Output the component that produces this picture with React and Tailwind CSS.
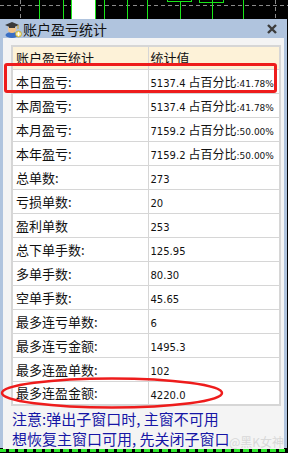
import React from 'react';

const rows = [
  ['本日盈亏:', '5137.4', '41.78%'],
  ['本周盈亏:', '5137.4', '41.78%'],
  ['本月盈亏:', '7159.2', '50.00%'],
  ['本年盈亏:', '7159.2', '50.00%'],
  ['总单数:', '273'],
  ['亏损单数:', '20'],
  ['盈利单数', '253'],
  ['总下单手数:', '125.95'],
  ['多单手数:', '80.30'],
  ['空单手数:', '45.65'],
  ['最多连亏单数:', '6'],
  ['最多连亏金额:', '1495.3'],
  ['最多连盈单数:', '102'],
  ['最多连盈金额:', '4220.0'],
];

const cjk = "font-['Noto_Sans_CJK_SC',sans-serif]";
const num = "font-['DejaVu_Sans','Noto_Sans_CJK_SC',sans-serif]";

// chart lines peeking out above the dialog
const ChartTop = () => (
  <svg width="288" height="19" className="block">
    <line x1="0" y1="5.5" x2="288" y2="5.5" stroke="#8a8a8a" strokeDasharray="4 3" />
    <line x1="20.5" y1="0" x2="20.5" y2="19" stroke="#8a8a8a" strokeDasharray="4 3" />
    <line x1="275.5" y1="0" x2="275.5" y2="19" stroke="#8a8a8a" strokeDasharray="4 3" />
    {[39, 63, 104, 127, 147, 212, 243].map((x) => (
      <line key={x} x1={x + 0.5} y1="0" x2={x + 0.5} y2="19" stroke="#19e619" />
    ))}
    <rect x="71.5" y="-1" width="24" height="21" fill="#ffffff" stroke="#19e619" />
    <rect x="167.5" y="-2" width="24" height="3.5" fill="none" stroke="#19e619" />
    <line x1="180.5" y1="1.5" x2="180.5" y2="19" stroke="#19e619" />
    <rect x="199.5" y="-2" width="24" height="4.5" fill="none" stroke="#19e619" />
  </svg>
);

const UserIcon = () => (
  <svg width="18" height="18" viewBox="0 0 18 18">
    <ellipse cx="8" cy="15" rx="6.5" ry="3" fill="#3a6fc4" />
    <circle cx="8" cy="9" r="4" fill="#f2c38a" />
    <path d="M1 5 L8 2 L15 5 L8 8 Z" fill="#3a3a3a" />
    <rect x="5" y="5.5" width="6" height="2.5" fill="#3a3a3a" />
    <line x1="14" y1="5" x2="14" y2="9" stroke="#c9a227" strokeWidth="1" />
    <circle cx="14.5" cy="14" r="3" fill="#f4e27a" stroke="#b89a20" strokeWidth="0.6" />
    <path d="M14.5 12 V16 M12.5 14 H16.5" stroke="#ffffff" strokeWidth="1" />
  </svg>
);

export default function App() {
  return (
    <div className="w-[288px] h-[453px] bg-black overflow-hidden flex flex-col relative">
      <ChartTop />

      <div className="w-[287px] h-[429px] bg-[#b0c4de] flex flex-col px-[3px] pb-[2px]">
        {/* title bar */}
        <div className="h-[19px] flex items-center shrink-0">
          <div className="ml-[1px] mt-[1px]"><UserIcon /></div>
          <span className={`${cjk} ml-[1px] text-[14px] leading-none text-[#111]`}>账户盈亏统计</span>
          <svg width="12" height="12" viewBox="0 0 12 12" className="ml-auto mr-[6px] mt-[1px]">
            <path d="M2 2 L10 10 M10 2 L2 10" stroke="#3c3c3c" strokeWidth="2.4" />
          </svg>
        </div>

        {/* body */}
        <div className="flex-1 bg-[#f4f4f4] pt-[7px] pl-[8px]">
          <table className="border-collapse border-2 border-[#d6d6d6] table-fixed w-[268px]">
            <colgroup>
              <col className="w-[136px]" />
              <col className="w-[132px]" />
            </colgroup>
            <thead>
              <tr className="h-[23px] bg-[#fdf2d8]">
                <th className={`${cjk} font-normal text-left text-[13px] text-[#111] pl-[3px] border border-[#d6d6d6]`}>账户盈亏统计</th>
                <th className={`${cjk} font-normal text-left text-[13px] text-[#111] pl-[2px] border border-[#d6d6d6]`}>统计值</th>
              </tr>
            </thead>
            <tbody>
              {rows.map(([label, val, pct]) => (
                <tr key={label} className="h-[24px] bg-white">
                  <td className={`${cjk} text-[13px] leading-none text-[#111] pl-[3px] border border-[#d6d6d6]`}>{label}</td>
                  <td className="pl-[2px] border border-[#d6d6d6] whitespace-nowrap leading-none text-[#111]">
                    <span className={`${num} text-[10px]`}>{val}</span>
                    {pct && (
                      <>
                        <span className={`${cjk} text-[12px] ml-[3px]`}>占百分比</span>
                        <span className={`${num} text-[9px]`}>:{pct}</span>
                      </>
                    )}
                  </td>
                </tr>
              ))}
            </tbody>
          </table>

          <div className={`${cjk} mt-[3px] ml-[1px] text-[15px] leading-[20px] text-[#1616a6] relative`}>
            <p>注意:弹出子窗口时, 主窗不可用</p>
            <p>想恢复主窗口可用, 先关闭子窗口</p>
            <span className="absolute right-[0px] top-[23px] text-[12px] text-[#d8d8d8]">@黑K女神</span>
          </div>
        </div>
      </div>

      <div className="flex-1 flex items-center">
        <div className="w-full h-[3px] bg-[repeating-linear-gradient(90deg,#2ee82e_0px,#2ee82e_6px,#000_6px,#000_9px)]" />
      </div>

      {/* red annotation marks */}
      <div className="absolute left-[4px] top-[63px] w-[273px] h-[30px] border-[3px] border-[#ee1c1c] rounded-[3px] pointer-events-none" />
      <svg className="absolute left-0 top-[376px] pointer-events-none" width="230" height="34">
        <ellipse cx="112" cy="17" rx="110" ry="14.5" fill="none" stroke="#ee1c1c" strokeWidth="2.5" />
      </svg>
    </div>
  );
}
